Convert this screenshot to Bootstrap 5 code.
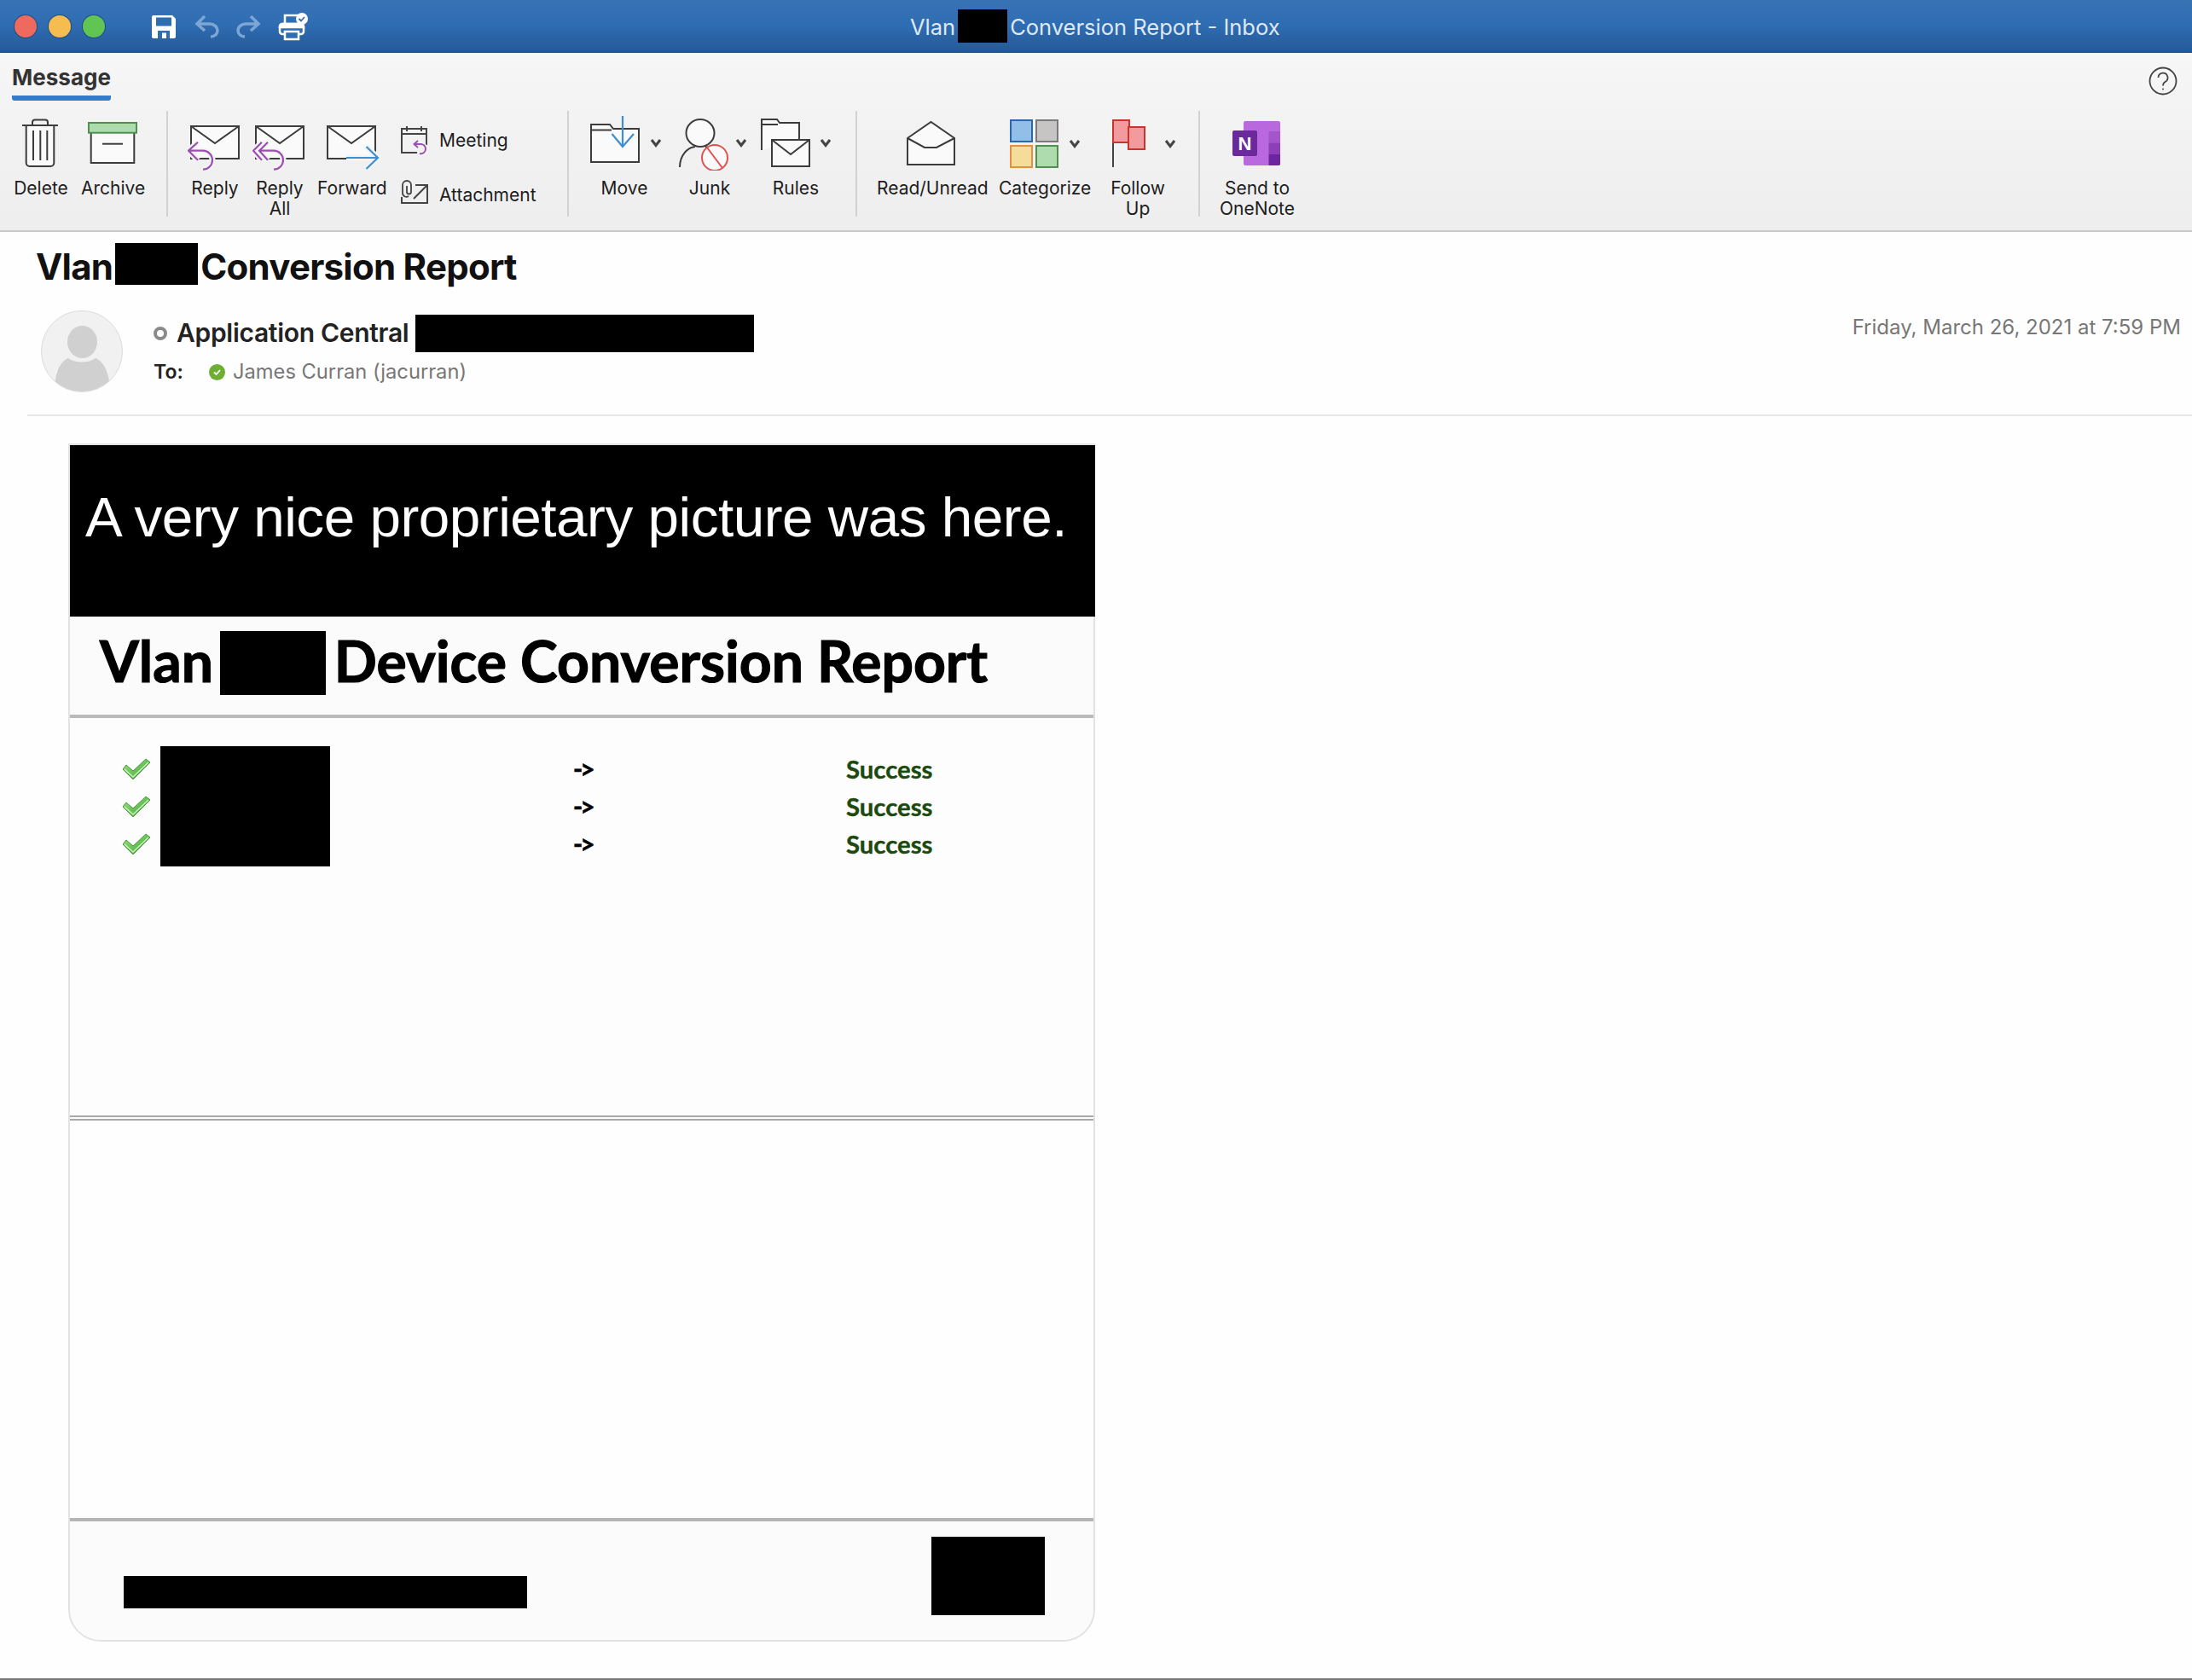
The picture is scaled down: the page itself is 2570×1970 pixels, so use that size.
<!DOCTYPE html>
<html lang="en">
<head>
<meta charset="utf-8">
<title>Vlan Conversion Report - Inbox</title>
<link href="https://cdn.jsdelivr.net/npm/bootstrap@5.3.0/dist/css/bootstrap.min.css" rel="stylesheet">
<style>
html,body{height:1970px;overflow:hidden}
body{background:#fefefe;font-family:Inter,"Liberation Sans",sans-serif;color:#222}
svg{display:block;flex:none}
.win{width:2570px;height:1970px}
.redact{background:#000;flex:none}
/* title bar */
.tbar{height:62px;background:linear-gradient(#3873b3 0,#2f6db3 45%,#255a99 97%,#1f4f85 100%);padding-left:17px}
.light{width:26px;height:26px;border-radius:50%;margin-right:14px;box-shadow:0 0 0 1px rgba(20,50,90,.5)}
.l-r{background:#ee6a5f}.l-y{background:#f5bd4f}.l-g{background:#61c554}
.qa-save{margin-left:41px}.qa-undo{margin-left:22px}.qa-redo{margin-left:18px}.qa-print{margin-left:20px}
.wtitle{margin-left:706px;font-size:25.500px;color:#dfe8f3;gap:3px;line-height:40px}
.wt-box{width:58px;height:39px;margin-top:-1px}
.wtitle span:not(.redact){padding-top:1px}
/* ribbon */
.ribbon{height:210px;background:linear-gradient(#f7f7f7,#f3f3f3 30%,#eeeeee);border-bottom:2px solid #c9c9c9}
.tabrow{height:68px;padding:0 17px 0 14px}
.tabname{font-size:26px;font-weight:700;color:#333;line-height:30px;padding:14px 0 6px;border-bottom:6px solid #3a78d0;height:56px;width:116px;border-radius:0 0 3px 3px;text-align:center;white-space:nowrap}
.help{margin-top:16px}
.tools{height:124px;padding-left:16px}
.tool{flex:none;padding-top:6px;font-size:21px;line-height:24px;text-align:center;color:#1d1d1d;white-space:nowrap}
.tool svg{margin-bottom:9px}
.w64{width:64px}.w73{width:73px}.w80{width:80px}.w88{width:88px}.w106{width:106px}.w129{width:129px}
.ml12{margin-left:12px}.ml13{margin-left:13px}.ml14{margin-left:14px}.ml15{margin-left:15px}.ml18{margin-left:18px}
.ml21{margin-left:21px}.ml23{margin-left:23px}.ml26{margin-left:26px}.ml27{margin-left:27px}.ml35{margin-left:35px}
.sep{width:2px;height:124px;background:#d2d2d2;flex:none}
.minis{width:160px;padding-top:17px;gap:28px;font-size:21px;color:#1d1d1d;flex:none}
.mini{height:36px;gap:13px}
/* mail header */
.subj{padding:13px 0 0 42px;gap:3px;height:62px;font-size:42px;font-weight:700;color:#111;letter-spacing:-.75px;line-height:55px}
.subj-box{width:97px;height:49px}
.who{margin:30px 13px 0 48px;height:96px}
.who-info{margin-left:36px;padding-top:5px}
.from{height:44px;gap:8px;font-size:30px;font-weight:600;color:#222;letter-spacing:-.3px;line-height:40px}
.from>span:nth-child(2){margin-top:-3px}
.from-box{width:397px;height:44px}
.ring{width:16px;height:16px;border:4px solid #8a8a8a;border-radius:50%;background:#fff;margin-right:3px}
.to{height:28px;margin-top:9px;font-size:23.700px}
.to b{font-weight:600;width:65px;color:#222;font-size:23px}
.okdot{margin-right:9px}
.to-name{color:#777}
.when{padding-top:6px;font-size:24px;line-height:28px;color:#777}
.hdiv{margin:26px 0 0 32px;border-top:2px solid #e7e7e7}
/* card */
.rpt{margin:32px 0 0 80px;width:1204px;height:1405px;border:2px solid #e2e2e2;border-radius:0 0 38px 38px;background:#fdfdfd}
.banner{height:201px;background:#000;color:#fff;font-family:"Liberation Sans",Arial,sans-serif;font-size:65.600px;letter-spacing:-.47px;line-height:75px;padding:47px 0 0 18px;white-space:nowrap;margin-right:-2px}
.rhead{height:119px;background:#fbfbfb;border-bottom:4px solid #bababa;padding:17px 0 0 35px;font-family:Lato,sans-serif;font-weight:700;font-size:66px;line-height:69px;color:#000;-webkit-text-stroke:1.2px #000}
.rh-box{width:124px;height:75px;margin:0 10px 0 8px}
.rbody{height:466px;padding:33px 0 0 61px;font-family:Lato,sans-serif;font-weight:700}
.stack{height:141px}
.stack>div{height:44px}
.c-check{width:45px}
.c-name{width:199px;height:141px}
.c-arrow{margin-left:285px;width:25px;font-size:30px;letter-spacing:-3px;color:#000;white-space:nowrap;-webkit-text-stroke:.6px #000}
.c-stat{margin-left:295px;font-size:29.300px;color:#1c4a0e;-webkit-text-stroke:.4px #1c4a0e}
.dbl{height:6px;border-top:2px solid #a8a8a8;border-bottom:2px solid #a8a8a8}
.rblank{height:470px;background:#fefefe;border-bottom:4px solid #b5b5b5}
.rfoot{height:139px;background:#fbfbfb;padding:0 57px 0 63px;border-radius:0 0 36px 36px}
.f-l{width:473px;height:38px;margin-top:64px}
.f-r{width:133px;height:92px;margin-top:18px}
.bstrip{height:2px;background:#777}
</style>
</head>
<body>
<div class="win d-flex flex-column">
  <div class="tbar d-flex align-items-center flex-none">
    <span class="light l-r"></span><span class="light l-y"></span><span class="light l-g"></span>
    <svg class="qa-save" width="28" height="27" viewBox="0 0 28 27"><path fill="#fff" d="M0 2a2 2 0 0 1 2-2h22l4 4v21a2 2 0 0 1-2 2H2a2 2 0 0 1-2-2z"/><rect x="5" y="2.500" width="18" height="10" fill="#2f6db3"/><rect x="7" y="18" width="14" height="9" fill="#2f6db3"/><rect x="12" y="20.500" width="5" height="6.500" fill="#fff"/></svg>
    <svg class="qa-undo" width="30" height="27" viewBox="0 0 30 27" fill="none" stroke="#7da6d4" stroke-width="3.500"><path d="M12 1 3 10l9 8M3 10h15a9 8 0 0 1 9 8 8 7 0 0 1-8 7"/></svg>
    <svg class="qa-redo" width="30" height="27" viewBox="0 0 30 27" fill="none" stroke="#7da6d4" stroke-width="3.500"><path d="M18 1l9 9-9 8M27 10H12a9 8 0 0 0-9 8 8 7 0 0 0 8 7"/></svg>
    <svg class="qa-print" width="35" height="33" viewBox="0 0 35 33" fill="none" stroke="#fff" stroke-width="2.500"><path d="M8 13V3h16"/><rect x="2" y="13" width="28" height="12" rx="3" fill="#2f6db3"/><path d="M2 16a3 3 0 0 1 3-3h22a3 3 0 0 1 3 3v1H2z" fill="#fff"/><rect x="8" y="22" width="16" height="9" fill="#2f6db3"/><circle cx="28" cy="7" r="7" fill="#fff" stroke="none"/><path d="M24.500 7l2.500 2.500 4-4.500" stroke="#2f6db3" stroke-width="1.800"/></svg>
    <div class="wtitle d-flex align-items-center"><span>Vlan</span><span class="redact wt-box"></span><span>Conversion Report - Inbox</span></div>
  </div>

  <div class="ribbon flex-none">
    <div class="tabrow d-flex justify-content-between align-items-start">
      <div class="tabname">Message</div>
      <svg class="help" width="34" height="34" viewBox="0 0 34 34" fill="none" stroke="#444" stroke-width="1.800"><circle cx="17" cy="17" r="15.500"/><path d="M11.500 13a5.500 5.500 0 1 1 8 5c-2 1.200-2.500 2-2.500 4.500"/><circle cx="17" cy="26.500" r="1" fill="#444" stroke="none"/></svg>
    </div>
    <div class="tools d-flex">
      <div class="tool w64"><svg width="64" height="64" viewBox="0 0 64 64" fill="none" stroke="#3c3c3c" stroke-width="2"><path d="M14.700 11v44a4 4 0 0 0 4 4h24.600a4 4 0 0 0 4-4V11z" fill="#fafafa"/><path d="M10 11h42M22 10V7.500a3 3 0 0 1 3-3h12a3 3 0 0 1 3 3V10M23 17v35M31.300 17v35M39.300 17v35"/></svg>Delete</div>
      <div class="tool w73 ml15"><svg width="73" height="64" viewBox="0 0 73 64" fill="none" stroke="#3c3c3c" stroke-width="2"><rect x="11.700" y="18" width="50.600" height="37" fill="#fafafa"/><rect x="9" y="8" width="56" height="11.700" fill="#aedcae" stroke="#4f8f4f"/><path d="M25 32.700h24"/></svg>Archive</div>
      <span class="sep ml27"></span>
      <div class="tool w64 ml23"><svg width="64" height="64" viewBox="0 0 64 64" fill="none" stroke="#3c3c3c" stroke-width="2"><path d="M4 12h56v38H4z" fill="#fafafa"/><path d="M4 12l28 20 28-20"/><path d="M1 40.700h17a11 11 0 0 1 0 22M12 30.700 1 40.700l11 11" stroke="#f4f4f4" stroke-width="7"/><path d="M1 40.700h17a11 11 0 0 1 0 22M12 30.700 1 40.700l11 11" stroke="#9b4fb0" stroke-width="2.200"/></svg>Reply</div>
      <div class="tool w64 ml12"><svg width="64" height="64" viewBox="0 0 64 64" fill="none" stroke="#3c3c3c" stroke-width="2"><path d="M4 12h56v38H4z" fill="#fafafa"/><path d="M4 12l28 20 28-20"/><path d="M8 40.700h17a11 11 0 0 1 0 22M18 30.700 8 40.700l10 11M11 30.700 1 40.700l10 11" stroke="#f4f4f4" stroke-width="7"/><path d="M8 40.700h17a11 11 0 0 1 0 22M18 30.700 8 40.700l10 11M11 30.700 1 40.700l10 11" stroke="#9b4fb0" stroke-width="2.200"/></svg>Reply<br>All</div>
      <div class="tool w80 ml12"><svg width="80" height="64" viewBox="0 0 80 64" fill="none" stroke="#3c3c3c" stroke-width="2"><path d="M12 12h56v38H12z" fill="#fafafa"/><path d="M12 12l28 20 28-20"/><path d="M34 49h37M57.500 36 71 49 57.500 62" stroke="#f4f4f4" stroke-width="7"/><path d="M34 49h37M57.500 36 71 49 57.500 62" stroke="#3f8fd0" stroke-width="2.200"/></svg>Forward</div>
      <div class="minis ml18 d-flex flex-column">
        <div class="mini d-flex align-items-center"><svg width="32" height="36" viewBox="0 0 32 36" fill="none" stroke="#444" stroke-width="2"><path d="M19 32H1V4h29v19M1 10h29M7 1v6M24 1v6"/><path d="M22 33a5.500 5.500 0 0 0 7-5.500 5.500 5.500 0 0 0-6-5.500h-7M20 18l-4.500 4 4.500 4" stroke="#f4f4f4" stroke-width="5"/><path d="M22 33a5.500 5.500 0 0 0 7-5.500 5.500 5.500 0 0 0-6-5.500h-7M20 18l-4.500 4 4.500 4" stroke="#9b4fb0"/></svg><span>Meeting</span></div>
        <div class="mini d-flex align-items-center"><svg width="32" height="36" viewBox="0 0 32 36" fill="none" stroke="#444" stroke-width="2"><path d="M17 6h14v21H1v-7M31 6 15 22"/><path d="M9 19a4.500 4.500 0 0 1-7-4V6a5 5 0 0 1 10 0v8a2.500 2.500 0 0 1-5 0V7" stroke-width="1.800"/></svg><span>Attachment</span></div>
      </div>
      <span class="sep ml35"></span>
      <div class="tool w88 ml21"><svg width="88" height="64" viewBox="0 0 88 64" fill="none" stroke="#3c3c3c" stroke-width="2"><path d="M5 54V10h22l4 5h30v39z" fill="#fafafa"/><path d="M5 16.500h24"/><path d="M42 0v36M29.500 21 42 36l13-15" stroke="#3f8fd0" stroke-width="2.200"/><path d="M76 28l5 6.500 5-6.500" stroke="#444" stroke-width="3"/></svg>Move</div>
      <div class="tool w88 ml12"><svg width="88" height="64" viewBox="0 0 88 64" fill="none" stroke="#3c3c3c" stroke-width="2"><ellipse cx="33" cy="20" rx="16.500" ry="16" fill="#fafafa"/><path d="M9 60c0-14 9-23 18-24M39 36c5 1 8 3 11 6"/><circle cx="50" cy="49" r="15" fill="#fafafa" stroke="#e0524f"/><path d="M41 37l18 24" stroke="#e0524f"/><path d="M76 28l5 6.500 5-6.500" stroke="#444" stroke-width="3"/></svg>Junk</div>
      <div class="tool w88 ml13"><svg width="88" height="64" viewBox="0 0 88 64" fill="none" stroke="#3c3c3c" stroke-width="2"><path d="M4 40V4h18l3 4h23v20" fill="#fafafa"/><path d="M4 10h19"/><path d="M16 28h44v31H16z" fill="#fafafa"/><path d="M16 28l22 17 22-17"/><path d="M74 28l5 6.500 5-6.500" stroke="#444" stroke-width="3"/></svg>Rules</div>
      <span class="sep ml26"></span>
      <div class="tool w129 ml23"><svg width="129" height="64" viewBox="0 0 129 64" fill="none" stroke="#3c3c3c" stroke-width="2"><path d="M36 26 63.500 7 91 26v31H36z" fill="#fafafa"/><path d="M36 26l20 11h14l21-11"/></svg>Read/Unread</div>
      <div class="tool w106 ml14"><svg width="106" height="64" viewBox="0 0 106 64" stroke-width="2"><rect x="14" y="5" width="25" height="25" fill="#92bfe8" stroke="#2b67ad"/><rect x="44" y="5" width="25" height="25" fill="#c6c5c3" stroke="#7a7a7a"/><rect x="14" y="35" width="25" height="25" fill="#f5dc9a" stroke="#e58f3f"/><rect x="44" y="35" width="25" height="25" fill="#aedcae" stroke="#4f8f4f"/><path d="M84 29l5 6.500 5-6.500" fill="none" stroke="#444" stroke-width="3"/></svg>Categorize</div>
      <div class="tool w88 ml13"><svg width="88" height="64" viewBox="0 0 88 64" fill="none" stroke-width="2"><path d="M15 32v28" stroke="#444"/><rect x="15" y="5" width="19" height="26" fill="#f29a9e" stroke="#c8352c"/><rect x="33" y="13" width="19" height="26" fill="#f29a9e" stroke="#c8352c"/><path d="M77 29l5 6.500 5-6.500" stroke="#444" stroke-width="3"/></svg>Follow<br>Up</div>
      <span class="sep ml27"></span>
      <div class="tool w88 ml23"><svg width="88" height="64" viewBox="0 0 88 64"><path fill="#b968de" d="M30 6h39a2 2 0 0 1 2 2v48a2 2 0 0 1-2 2H30a2 2 0 0 1-2-2V8a2 2 0 0 1 2-2z"/><rect x="57.500" y="18" width="13.500" height="13.500" fill="#a355c9"/><rect x="57.500" y="31.500" width="13.500" height="13.500" fill="#8d3fb8"/><path fill="#6d24a0" d="M57.500 45H71v11a2 2 0 0 1-2 2H57.500z"/><rect x="15" y="17" width="29" height="30" rx="2" fill="#6b2a9b"/><text x="29.500" y="40" text-anchor="middle" font-family="Liberation Sans,sans-serif" font-weight="700" font-size="22" fill="#fff">N</text></svg>Send to<br>OneNote</div>
    </div>
  </div>

  <main class="flex-grow-1">
    <div class="subj d-flex"><span>Vlan</span><span class="redact subj-box"></span><span>Conversion Report</span></div>
    <div class="who d-flex justify-content-between">
      <div class="d-flex">
        <svg width="96" height="96" viewBox="0 0 96 96"><defs><clipPath id="av"><circle cx="48" cy="48" r="47"/></clipPath></defs><circle cx="48" cy="48" r="47.500" fill="#f1f1f1" stroke="#dcdcdc"/><g clip-path="url(#av)"><path fill="#d0d0d0" d="M16 96c0-22 6-36 16-40 8 6 24 6 32 0 10 4 17 18 17 40z"/><ellipse cx="48.500" cy="37" rx="18.500" ry="20" fill="#d0d0d0" stroke="#f1f1f1" stroke-width="2"/></g></svg>
        <div class="who-info">
          <div class="from d-flex align-items-center"><span class="ring"></span><span>Application Central</span><span class="redact from-box"></span></div>
          <div class="to d-flex align-items-center"><b>To:</b><svg class="okdot" width="19" height="19" viewBox="0 0 19 19"><circle cx="9.500" cy="9.500" r="9.500" fill="#6fae35"/><path d="M6 9.500l2.500 2.500 4.500-5" fill="none" stroke="#fff" stroke-width="1.800"/></svg><span class="to-name">James Curran (jacurran)</span></div>
        </div>
      </div>
      <div class="when">Friday, March 26, 2021 at 7:59 PM</div>
    </div>
    <div class="hdiv"></div>

    <div class="rpt">
      <div class="banner">A very nice proprietary picture was here.</div>
      <div class="rhead d-flex"><span>Vlan</span><span class="redact rh-box"></span><span>Device Conversion Report</span></div>
      <div class="rbody d-flex">
        <div class="stack c-check d-flex flex-column justify-content-center">
          <div class="d-flex align-items-center"><svg width="34" height="26" viewBox="0 0 34 26"><defs><linearGradient id="gc" x1="0" y1="0" x2="1" y2="1"><stop offset="0" stop-color="#9be584"/><stop offset="1" stop-color="#3f9e35"/></linearGradient></defs><path d="M1 13l4-5 8 7L28 1l5 4-20 20z" fill="url(#gc)" stroke="#4a9a3c"/><path d="M3 13l10 9L31 5" fill="none" stroke="#c5f2b5" stroke-width="1.500"/></svg></div>
          <div class="d-flex align-items-center"><svg width="34" height="26" viewBox="0 0 34 26"><path d="M1 13l4-5 8 7L28 1l5 4-20 20z" fill="url(#gc)" stroke="#4a9a3c"/><path d="M3 13l10 9L31 5" fill="none" stroke="#c5f2b5" stroke-width="1.500"/></svg></div>
          <div class="d-flex align-items-center"><svg width="34" height="26" viewBox="0 0 34 26"><path d="M1 13l4-5 8 7L28 1l5 4-20 20z" fill="url(#gc)" stroke="#4a9a3c"/><path d="M3 13l10 9L31 5" fill="none" stroke="#c5f2b5" stroke-width="1.500"/></svg></div>
        </div>
        <div class="redact c-name"></div>
        <div class="stack c-arrow d-flex flex-column justify-content-center">
          <div class="d-flex align-items-center">-&gt;</div><div class="d-flex align-items-center">-&gt;</div><div class="d-flex align-items-center">-&gt;</div>
        </div>
        <div class="stack c-stat d-flex flex-column justify-content-center">
          <div class="d-flex align-items-center">Success</div><div class="d-flex align-items-center">Success</div><div class="d-flex align-items-center">Success</div>
        </div>
      </div>
      <div class="dbl"></div>
      <div class="rblank"></div>
      <div class="rfoot d-flex justify-content-between">
        <div class="redact f-l"></div>
        <div class="redact f-r"></div>
      </div>
    </div>
  </main>
  <div class="bstrip flex-none"></div>
</div>
</body>
</html>
